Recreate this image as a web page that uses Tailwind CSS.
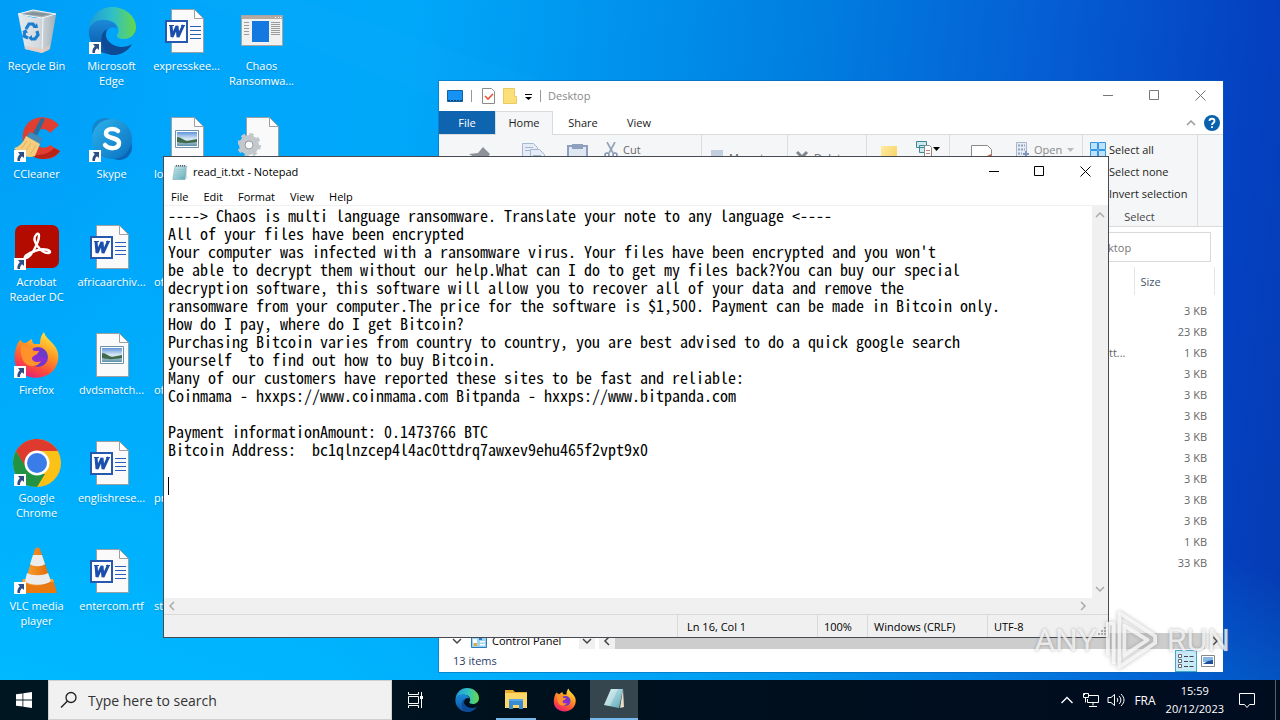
<!DOCTYPE html>
<html lang="en">
<head>
<meta charset="utf-8">
<title>Desktop</title>
<script src="https://cdn.jsdelivr.net/npm/@tailwindcss/browser@4"></script>
</head>
<body class="h-screen overflow-hidden font-['Open_Sans',sans-serif] text-[11px] leading-[15px] text-black">

<!-- Shared icons -->
<svg class="absolute size-0" aria-hidden="true">
  <defs>
    <linearGradient id="gEdgeA" x1="0" y1="0" x2="1" y2="0"><stop offset="0" stop-color="#1f9ad8"/><stop offset=".5" stop-color="#2fc0c8"/><stop offset="1" stop-color="#66d848"/></linearGradient>
    <linearGradient id="gEdgeB" x1="0" y1="0" x2="0" y2="1"><stop offset="0" stop-color="#1b8bd8"/><stop offset="1" stop-color="#0c50a4"/></linearGradient>
    <linearGradient id="gFox" x1=".8" y1="0" x2=".3" y2="1"><stop offset="0" stop-color="#fff044"/><stop offset=".4" stop-color="#ff9a24"/><stop offset=".75" stop-color="#ff4a3c"/><stop offset="1" stop-color="#e0207c"/></linearGradient>
    <linearGradient id="gSky" x1="0" y1="0" x2="1" y2="1"><stop offset="0" stop-color="#2cb4ec"/><stop offset="1" stop-color="#0a6fc0"/></linearGradient>
    <linearGradient id="gBin" x1="0" y1="0" x2="1" y2="0"><stop offset="0" stop-color="#e4e9ec"/><stop offset=".55" stop-color="#d4dade"/><stop offset="1" stop-color="#a2afb8"/></linearGradient>
    <linearGradient id="gCone" x1="0" y1="0" x2="1" y2="0"><stop offset="0" stop-color="#f9a030"/><stop offset="1" stop-color="#e06808"/></linearGradient>
    <linearGradient id="gPhoto" x1="0" y1="0" x2="0" y2="1"><stop offset="0" stop-color="#5e94dc"/><stop offset=".5" stop-color="#dcebf5"/><stop offset="1" stop-color="#5d8fa8"/></linearGradient>
    <linearGradient id="gPad" x1="0" y1="0" x2="1" y2="1"><stop offset="0" stop-color="#d4eef2"/><stop offset="1" stop-color="#5ba8b6"/></linearGradient>
    <linearGradient id="gFold" x1="0" y1="0" x2="1" y2="1"><stop offset="0" stop-color="#ffeaa0"/><stop offset="1" stop-color="#f6cc50"/></linearGradient>
  </defs>
  <symbol id="shortcut" viewBox="0 0 14 14"><path fill="#fff" d="M1 1h12v12H1z"/><path fill="#2d4f86" d="M5 3h6v6L9 7.300C7.500 8.500 7 9.600 7 12H4.500C4 9 5 7 6.800 5.200z"/></symbol>
  <symbol id="page" viewBox="0 0 48 48"><path fill="#fafafa" stroke="#9aa0a4" d="M8.500 2.500h23l9 9v34h-32z"/><path fill="#fff" stroke="#9aa0a4" d="M31.500 2.500v9h9z"/></symbol>
  <symbol id="word" viewBox="0 0 48 48"><use href="#page"/><path stroke="#2b5fb8" d="M27 19.500h11M27 23.500h11M27 27.500h11M27 31.500h11"/><path fill="#fff" stroke="#2758b0" stroke-width="2" d="M3 14h21v21H3z"/><path fill="none" stroke="#1b4fae" stroke-width="3" stroke-linejoin="bevel" d="M8 18l1 12 5-11 1 11 5.500-12"/><path stroke="#1b4fae" d="M6 18.500h5M18 18.500h4"/></symbol>
  <symbol id="photo" viewBox="0 0 48 48"><use href="#page"/><path fill="#fff" stroke="#6c91a8" d="M12.500 15.500h23v17h-23z"/><path fill="url(#gPhoto)" d="M14 17h20v14H14z"/><path fill="#3f6a4a" d="M14 22c4 0 6 3 10 4l10-2v3c-7 1-13 2-20 0z"/></symbol>
  <symbol id="gearpage" viewBox="0 0 48 48"><use href="#page"/><circle cx="11" cy="30" r="7" fill="none" stroke="#c3c8cd" stroke-width="6"/><circle cx="11" cy="30" r="10.500" fill="none" stroke="#c3c8cd" stroke-width="3" stroke-dasharray="4.200 4.046"/><circle cx="11" cy="30" r="4" fill="#fafafa" stroke="#969ca2"/></symbol>
  <symbol id="bin" viewBox="0 0 48 48"><path fill="url(#gBin)" d="M5 7l7 35 17 4 8-4 6-34-21 3z"/><path fill="#a9b3b9" d="M5 7l15-4 23 4-14 4z"/><path fill="#84929a" d="M9 7l11-2 18 2-9 2z"/><path fill="none" stroke="#f4f8fa" d="M5 7l15-4 23 4-14 4zM30 11l-1 34"/><path fill="#e8c9bc" opacity=".7" d="M12 39l17 3 8-4-1 5-7 3-17-4z"/><g fill="none" stroke="#1b7fd0" stroke-width="3.200"><path d="M13 22l3-5h4l2 3M24 24l1 4-3 4h-3M15 31l-4-2 1-5"/></g><path fill="#1b7fd0" d="M20 21h5l-1-5zM19 28v6l-4-3zM9 25l4-3 2 4z"/></symbol>
  <symbol id="edge" viewBox="0 0 48 48"><path fill="url(#gEdgeA)" d="M1 22C2 9 12 0 24 0c14 0 24 10 24 20 0 7-5 12-12 12-5 0-8-2-7-4 3-3 2-12-7-14-9-2-18 1-21 8z"/><path fill="url(#gEdgeB)" d="M1 22c3-8 12-11 21-8 5 2 7 5 7 8-2-3-10-3-11 6-1 8 6 15 15 17-8 4-19 3-26-5C2 35 0 28 1 22z"/><path fill="#0d4b96" d="M19 22c-4 8 2 17 14 18 5 0 8-1 11-3-4 8-13 12-21 11C12 44 10 27 19 22z"/></symbol>
  <symbol id="chaos" viewBox="0 0 48 48"><path fill="#f1f1f1" stroke="#a9a49f" d="M3.500 8.500h41v30h-41z"/><path fill="#b5aaa1" d="M4 9h40v3H4z"/><path stroke="#fff" d="M37 10.500h1M40 10.500h1M42 10.500h1"/><path fill="#1379e0" d="M14 14h17v21H14z"/><path stroke="#9b9b9b" d="M6 15.500h5M6 18.500h5M6 21.500h5M6 24.500h5M6 27.500h5M33 15.500h9M33 17.500h9M33 19.500h9M33 21.500h9M33 23.500h9M33 25.500h9M33 27.500h9"/></symbol>
  <symbol id="ccleaner" viewBox="0 0 48 48"><path fill="#e03e30" d="M46 10C36-2 14-1 10 18c-2 15 8 26 22 26 7 0 12-3 15-8l-10-6c-5 5-14 3-15-6-1-9 9-14 15-6z"/><path fill="#ba2418" d="M18 40c8 7 24 4 29-4l-6-3c-5 6-14 8-23 7z"/><path fill="#2d6c98" d="M28 3l4 1-8 17-5-1z"/><path fill="#3f8bbb" d="M17 17l13 6-3 6-14-7z"/><path fill="#f4cd7e" d="M13 21l14 8-5 12c-8 3-15-1-21-8 5-1 9-5 12-12z"/><path fill="none" stroke="#e3b45c" d="M14 26L8 34M18 28l-6 9M23 30l-6 10"/></symbol>
  <symbol id="skype" viewBox="0 0 48 48"><circle cx="17" cy="16" r="13" fill="#1585cf"/><circle cx="31" cy="32" r="13" fill="#0b66b6"/><circle cx="24" cy="24" r="20" fill="url(#gSky)"/><path fill="none" stroke="#fff" stroke-width="4.500" stroke-linecap="round" d="M30 16c-3-3-13-3-12 3 1 5 13 3 13 9 0 7-11 6-14 2"/></symbol>
  <symbol id="acrobat" viewBox="0 0 48 48"><rect x="2" y="2" width="44" height="43" rx="7" fill="#b30b00"/><path fill="none" stroke="#fff" stroke-width="2.400" stroke-linejoin="round" d="M23 12c-5 5 5 19 13 18 4-2-5-6-14-2-7 2-13 7-9 7 6-1 13-17 13-22 0-3-2-3-3-1z"/></symbol>
  <symbol id="firefox" viewBox="0 0 48 48"><path fill="url(#gFox)" d="M4 14c1-3 3-5 4-5 1 3 3 3 5 3 2-2 4-3 6-4 0 3 1 5 3 5h5c0-5 1-9 4-12 1 5 6 8 10 13 7 8 5 19-1 26-9 9-25 9-34 0C0 33 1 22 4 14z"/><circle cx="25" cy="26" r="10" fill="#6a3bc8"/><path fill="#8b2ed0" d="M15 24c2-6 10-8 15-4-4 0-5 2-5 4 3 3 7 0 9 4-4 8-17 8-19-4z"/><path fill="#ff922a" d="M8 15c5-1 10 1 13 5h5c-1 4-6 4-7 7 0 4 6 5 9 3-3 6-11 7-16 2-3-3-5-10-4-17z"/></symbol>
  <symbol id="chrome" viewBox="0 0 48 48"><circle cx="24" cy="24" r="24" fill="#fbc116"/><path fill="#de3b2e" d="M3 12C9 2 18 0 24 0c9 0 17 5 21 12H24L12 28z"/><path fill="#229342" d="M3 12l11 18 10 5h8L24 48C9 48 0 36 0 24c0-4 1-8 3-12z"/><circle cx="24" cy="24" r="12.500" fill="#fff"/><circle cx="24" cy="24" r="10" fill="#3a7ce8"/></symbol>
  <symbol id="vlc" viewBox="0 0 48 48"><path fill="#e87a10" d="M10 32h30l4 14H5z"/><path fill="#f8a238" d="M10 32h30l1 3H9z"/><path fill="url(#gCone)" d="M22 2c1-2 4-2 5 0l11 33c-4 5-22 5-26 0z"/><path fill="#ececec" d="M20 8h9l3 9c-3 3-12 3-15 0zM14 26c5 3 16 3 21 0l3 8c-5 5-22 5-26 0z"/></symbol>
  <symbol id="notepad" viewBox="0 0 16 16"><path fill="#e2e2da" d="M14 3l1.500 11.500-2 1z"/><path fill="url(#gPad)" stroke="#78a7ae" stroke-width=".6" d="M3 2h11.500L13 15.500H.8z"/><path stroke="#8ec3cc" stroke-width=".7" d="M3.500 5.500h9M3 7.500h9M3 9.500h9M2.500 11.500h9"/><path stroke="#5a5a5a" stroke-dasharray="1 1" stroke-width="1.500" d="M4 1.800h10"/></symbol>
  <symbol id="folder" viewBox="0 0 24 24"><path fill="#e8a92c" d="M1 3h8l2 2h12v4H1z"/><path fill="#ffd767" d="M1 6h22v15H1z"/><path fill="#3a8ad4" d="M5 12h14v10h-4v-4H9v4H5z"/><path fill="#5ba6e6" d="M5 12h14v2H5z"/></symbol>
  <symbol id="close" viewBox="0 0 11 11"><path fill="none" stroke="currentColor" d="M.5.5l10 10M10.500.5l-10 10"/></symbol>
  <symbol id="max" viewBox="0 0 11 11"><path fill="none" stroke="currentColor" d="M.5.5h9v9h-9z"/></symbol>
  <symbol id="min" viewBox="0 0 11 11"><path stroke="currentColor" d="M0 5.500h10"/></symbol>
  <symbol id="up" viewBox="0 0 10 10"><path fill="none" stroke="currentColor" stroke-width="1.500" d="M1 7l4-4 4 4"/></symbol>
  <symbol id="caret" viewBox="0 0 7 4"><path fill="currentColor" d="M0 0h7L3.500 4z"/></symbol>
</svg>

<div class="flex h-full flex-col">
  <main class="relative min-h-0 flex-1 overflow-hidden bg-[linear-gradient(97deg,#009df6_0%,#00a6fb_12%,#00a8fa_30%,#0098f0_42%,#007ee0_60%,#0560d4_76%,#0442c2_92%,#053bb2_100%)]">
    <div class="absolute inset-0 bg-[linear-gradient(20deg,#00b9ff_0%,#00b4ff99_22%,#00b4ff00_50%)]"></div>
    <svg class="absolute inset-0 h-[160px] w-full" aria-hidden="true"><path fill="#20b4ff" opacity=".1" d="M190 0h110l300 100H440z"/></svg>

    <!-- Desktop icons -->
    <div class="relative -ml-px grid h-[648px] w-[300px] grid-flow-col auto-cols-[75px] grid-rows-6 text-center text-white text-shadow-sm">
      <a href="#" class="flex flex-col items-center gap-[3px] pt-[7px]"><svg class="size-12"><use href="#bin"/></svg>Recycle Bin</a>
      <a href="#" class="flex flex-col items-center gap-[3px] pt-[7px]"><svg class="size-12"><use href="#ccleaner"/><use href="#shortcut" y="34" width="14" height="14"/></svg>CCleaner</a>
      <a href="#" class="flex flex-col items-center gap-[3px] pt-[7px]"><svg class="size-12"><use href="#acrobat"/><use href="#shortcut" y="34" width="14" height="14"/></svg><span>Acrobat<br>Reader DC</span></a>
      <a href="#" class="flex flex-col items-center gap-[3px] pt-[7px]"><svg class="size-12"><use href="#firefox"/><use href="#shortcut" y="34" width="14" height="14"/></svg>Firefox</a>
      <a href="#" class="flex flex-col items-center gap-[3px] pt-[7px]"><svg class="size-12"><use href="#chrome"/><use href="#shortcut" y="34" width="14" height="14"/></svg><span>Google<br>Chrome</span></a>
      <a href="#" class="flex flex-col items-center gap-[3px] pt-[7px]"><svg class="size-12"><use href="#vlc"/><use href="#shortcut" y="34" width="14" height="14"/></svg><span>VLC media<br>player</span></a>

      <a href="#" class="flex flex-col items-center gap-[3px] pt-[7px]"><svg class="size-12"><use href="#edge"/><use href="#shortcut" y="34" width="14" height="14"/></svg><span>Microsoft<br>Edge</span></a>
      <a href="#" class="flex flex-col items-center gap-[3px] pt-[7px]"><svg class="size-12"><use href="#skype"/><use href="#shortcut" y="34" width="14" height="14"/></svg>Skype</a>
      <a href="#" class="flex flex-col items-center gap-[3px] pt-[7px]"><svg class="size-12"><use href="#word"/></svg>africaarchiv...</a>
      <a href="#" class="flex flex-col items-center gap-[3px] pt-[7px]"><svg class="size-12"><use href="#photo"/></svg>dvdsmatch...</a>
      <a href="#" class="flex flex-col items-center gap-[3px] pt-[7px]"><svg class="size-12"><use href="#word"/></svg>englishrese...</a>
      <a href="#" class="flex flex-col items-center gap-[3px] pt-[7px]"><svg class="size-12"><use href="#word"/></svg>entercom.rtf</a>

      <a href="#" class="flex flex-col items-center gap-[3px] pt-[7px]"><svg class="size-12"><use href="#word"/></svg>expresskee...</a>
      <a href="#" class="flex flex-col items-center gap-[3px] pt-[7px]"><svg class="size-12"><use href="#photo"/></svg><span class="self-start pl-[5px]">lo</span></a>
      <a href="#" class="flex flex-col pt-[58px] pl-[5px] text-left">of</a>
      <a href="#" class="flex flex-col pt-[58px] pl-[5px] text-left">of</a>
      <a href="#" class="flex flex-col pt-[58px] pl-[5px] text-left">pr</a>
      <a href="#" class="flex flex-col pt-[58px] pl-[5px] text-left">st</a>

      <a href="#" class="flex flex-col items-center gap-[3px] pt-[7px]"><svg class="size-12"><use href="#chaos"/></svg><span>Chaos<br>Ransomwa...</span></a>
      <a href="#" aria-label="Settings file" class="flex flex-col items-center pt-[7px]"><svg class="size-12"><use href="#gearpage"/></svg></a>
    </div>

    <!-- File Explorer window -->
    <section class="absolute top-[81px] right-[57px] bottom-2 left-[439px] flex flex-col bg-white shadow-[0_0_0_1px_#0c5fa880]">
      <header class="flex h-[30px] shrink-0 items-center text-[#888]">
        <svg class="ml-2 h-4 w-4" viewBox="0 0 16 16"><path fill="#1593f5" stroke="#12629f" d="M.5 2.500h15v11H.5z"/><path stroke="#10406a" d="M1 12.500h14" stroke-dasharray="2 1"/></svg>
        <span class="ml-2 h-3 w-px bg-[#999]"></span>
        <svg class="ml-2 h-4 w-4" viewBox="0 0 16 16"><path fill="#fff" stroke="#8b8b8b" d="M2.500.5h9l3 3v12h-12z"/><path fill="none" stroke="#ea5a3c" stroke-width="1.700" d="M5 8l3 3 5-5"/></svg>
        <svg class="ml-[6px] h-4 w-4" viewBox="0 0 16 16"><path fill="#fbdf7b" stroke="#eec95e" d="M1.500.5h11v8h2v7h-13z"/></svg>
        <svg class="ml-[6px] h-4 w-2.5 text-black" viewBox="0 0 10 16"><path stroke="currentColor" d="M1 6.500h7"/><path fill="currentColor" d="M1 9h7L4.500 12z"/></svg>
        <span class="ml-[6px] h-3 w-px bg-[#999]"></span>
        <h2 class="ml-[7px] pb-[2px]">Desktop</h2>
        <div class="ml-auto flex self-stretch pb-[2px] text-[#777]">
          <button aria-label="Minimize" class="grid w-[46px] place-items-center"><svg class="size-[11px]"><use href="#min"/></svg></button>
          <button aria-label="Maximize" class="grid w-[46px] place-items-center"><svg class="size-[11px]"><use href="#max"/></svg></button>
          <button aria-label="Close" class="grid w-[46px] place-items-center"><svg class="size-[11px]"><use href="#close"/></svg></button>
        </div>
      </header>
      <nav class="flex h-6 shrink-0 items-stretch border-b border-[#dadbdc] text-[#222]">
        <button class="w-14 bg-[#0f64b0] text-white">File</button>
        <button class="-mb-px w-[58px] border border-b-0 border-[#dadbdc] bg-[#f5f6f7] pb-[2px]">Home</button>
        <button class="w-[60px]">Share</button>
        <button class="w-[52px]">View</button>
        <button aria-label="Collapse ribbon" class="mr-2 ml-auto text-[#999]"><svg class="size-2.5"><use href="#up"/></svg></button>
        <button aria-label="Help" class="mr-[3px] self-center"><svg class="size-4" viewBox="0 0 16 16"><circle cx="8" cy="8" r="8" fill="#0962ae"/><path fill="none" stroke="#fff" stroke-width="1.800" d="M5.500 6c0-3 5-3 5 0 0 2-2.500 2-2.500 4M8 11.200v1.800"/></svg></button>
      </nav>
      <div class="flex h-[92px] shrink-0 border-b border-[#dadbdc] bg-[#f5f6f7] text-[#666]">
        <div class="flex w-[263px] items-start gap-4 border-r border-[#dcdddf] pt-[7px] pl-[28px]">
          <svg class="mt-1 size-7" viewBox="0 0 28 28"><path fill="#8d9399" d="M16 1l7 7-5 7-5 1-6 6-1-1 1-10-5-3 9-1z"/></svg>
          <svg class="ml-2 size-7" viewBox="0 0 28 28"><path fill="#e5ecf6" stroke="#a6b7d4" d="M3.500 1.500h11l4 4v16h-15z"/><path fill="#e5ecf6" stroke="#a6b7d4" d="M11.500 7.500h9l5 5v14h-14z"/><path stroke="#a6b7d4" d="M6 5.500h8M6 8.500h5M14 13.500h8M14 16.500h9"/></svg>
          <svg class="size-7" viewBox="0 0 28 28"><path fill="#dfe7f2" stroke="#8ea0bd" stroke-width="2" d="M5 4h19v22H5z"/><path fill="#8ea0bd" d="M9 2h11v5H9z"/></svg>
          <div class="-ml-1 flex gap-1"><svg class="h-4 w-4" viewBox="0 0 16 16"><path fill="none" stroke="#8fa0b8" stroke-width="1.600" d="M4 0l6 11M12 0L6 11"/><circle cx="4" cy="13" r="2" fill="none" stroke="#7f93b2" stroke-width="1.500"/><circle cx="12" cy="13" r="2" fill="none" stroke="#7f93b2" stroke-width="1.500"/></svg>Cut</div>
        </div>
        <div class="flex w-[86px] items-start gap-1 border-r border-[#dcdddf] pt-[15px] pl-[9px]"><svg class="h-4 w-3.5"><path fill="#c2cfdf" d="M0 0h12v14H0z"/></svg><span class="whitespace-nowrap">Move to</span><svg class="mt-[6px] h-1 w-[7px] text-[#999]"><use href="#caret"/></svg></div>
        <div class="flex w-[79px] items-start gap-1 border-r border-[#dcdddf] pt-[15px] pl-2"><svg class="h-4 w-3.5"><path stroke="#7f858b" stroke-width="3" d="M1 2l10 10M11 2L1 12"/></svg>Delete<svg class="mt-[6px] h-1 w-[7px] text-[#999]"><use href="#caret"/></svg></div>
        <div class="flex w-[83px] items-start border-r border-[#dcdddf] pt-[5px] pl-[13px]">
          <svg class="mt-[6px] h-8 w-5" viewBox="0 0 20 32"><path fill="url(#gFold)" d="M1 0h16v28H1z"/></svg>
          <svg class="ml-4 size-[18px]" viewBox="0 0 18 18"><path fill="#cfe8ee" stroke="#3e8794" d="M.5 1.500h10v6H.5zM3.500 5.500h9v7h-9z"/><path fill="#fff" stroke="#8a8a8a" d="M8.500 5.500h5l2 2v10h-7z"/><path stroke="#d37e6d" d="M10 10.500h4M10 13.500h4"/></svg>
          <svg class="mt-[7px] -ml-px h-1 w-[7px] text-black"><use href="#caret"/></svg>
        </div>
        <div class="flex w-[133px] items-start border-r border-[#dcdddf] pt-[7px] pl-[20px]">
          <svg class="mt-0.5 size-7" viewBox="0 0 28 28"><path fill="#fff" stroke="#8a8a8a" d="M1.500 1.500h16l4 4v22h-20z"/><path fill="#d8582d" d="M17 12l4-2v8h-4z"/></svg>
          <svg class="ml-4 size-4" viewBox="0 0 16 16"><path fill="#e8edf5" stroke="#a9b7cd" d="M2.500.5h10v14h-10z"/><path stroke="#8fa3c4" stroke-dasharray="2 1" stroke-width="2" d="M4 3.500h7M4 7.500h7M4 11.500h4"/><path stroke="#7f95bb" stroke-width="2" d="M9 12h6M12 9v6"/></svg>
          <span class="ml-1 text-[#888]">Open</span><svg class="mt-[6px] ml-[5px] h-1 w-[7px] text-[#bbb]"><use href="#caret"/></svg>
        </div>
        <div class="flex w-[115px] flex-col border-r border-[#dcdddf] pt-[7px] pl-[7px] text-[#1e1e1e]">
          <button class="flex h-[22px] items-start gap-[3px] whitespace-nowrap"><svg class="size-4" viewBox="0 0 16 16"><path fill="#bfe2fb" stroke="#3596e4" d="M.5.5h7v7h-7zM8.500.5h7v7h-7zM.5 8.500h7v7h-7zM8.500 8.500h7v7h-7z"/></svg>Select all</button>
          <button class="h-[22px] pb-[7px] pl-[19px] text-left whitespace-nowrap">Select none</button>
          <button class="h-[23px] pb-2 pl-[19px] text-left whitespace-nowrap">Invert selection</button>
          <span class="pr-2 text-center text-[#444]">Select</span>
        </div>
      </div>
      <div class="flex shrink-0 justify-end px-3 py-[5px]"><input aria-label="Search Desktop" value="Search Desktop" class="h-[30px] w-[166px] border border-[#d9d9d9] pl-[5px] text-[#777]"></div>
      <div class="flex min-h-0 flex-1 flex-col pl-[655px]">
        <table class="w-full table-fixed text-[#666]">
          <thead><tr class="h-7 text-left text-[#44556a]"><th aria-label="Type" class="w-10 border-r border-[#e5e5e5]"></th><th class="border-r border-[#e5e5e5] pl-[6px] font-normal">Size</th><td class="w-[9px]"></td></tr></thead>
          <tbody>
            <tr class="h-[5px]"></tr>
            <tr class="h-[21px]"><td></td><td class="pr-[7px] text-right">3 KB</td></tr>
            <tr class="h-[21px]"><td></td><td class="pr-[7px] text-right">23 KB</td></tr>
            <tr class="h-[21px]"><td class="pl-[15px]">tt...</td><td class="pr-[7px] text-right">1 KB</td></tr>
            <tr class="h-[21px]"><td></td><td class="pr-[7px] text-right">3 KB</td></tr>
            <tr class="h-[21px]"><td></td><td class="pr-[7px] text-right">3 KB</td></tr>
            <tr class="h-[21px]"><td></td><td class="pr-[7px] text-right">3 KB</td></tr>
            <tr class="h-[21px]"><td></td><td class="pr-[7px] text-right">3 KB</td></tr>
            <tr class="h-[21px]"><td></td><td class="pr-[7px] text-right">3 KB</td></tr>
            <tr class="h-[21px]"><td></td><td class="pr-[7px] text-right">3 KB</td></tr>
            <tr class="h-[21px]"><td></td><td class="pr-[7px] text-right">3 KB</td></tr>
            <tr class="h-[21px]"><td></td><td class="pr-[7px] text-right">3 KB</td></tr>
            <tr class="h-[21px]"><td></td><td class="pr-[7px] text-right">1 KB</td></tr>
            <tr class="h-[21px]"><td></td><td class="pr-[7px] text-right">33 KB</td></tr>
          </tbody>
        </table>
      </div>
      <div class="flex h-4 shrink-0 items-center">
        <svg class="ml-[13px] size-2.5 rotate-180 text-[#444]"><use href="#up"/></svg>
        <svg class="ml-[9px] size-4" viewBox="0 0 16 16"><path fill="#9bd3f5" stroke="#2c7cb8" d="M.5 1.500h15v13H.5z"/><path fill="#fff" d="M2 6h4v4H2zM9 8h5v1.500H9zM9 11h5v1.500H9z"/><path fill="#2878c8" d="M8 3h3v4H8z"/><path fill="#eba932" d="M3 10h3v3H3z"/></svg>
        <span class="ml-[5px] w-[87px] pb-[2px] whitespace-nowrap">Control Panel</span>
        <span class="grid h-4 w-4 place-items-center bg-[#f0f0f0] text-[#444]"><svg class="size-2.5 rotate-180"><use href="#up"/></svg></span>
        <div class="ml-1 flex h-4 flex-1 items-center bg-[#f0f0f0] text-[#444]">
          <svg class="mx-[3px] size-2.5 -rotate-90"><use href="#up"/></svg>
          <div class="h-4 flex-1 bg-[#cdcdcd]"></div>
          <svg class="mr-[3px] ml-[5px] size-2.5 rotate-90"><use href="#up"/></svg>
        </div>
      </div>
      <footer class="flex h-[23px] shrink-0 items-center pl-[14px] text-[#2b3a6b]">
        13 items
        <button aria-label="Details view" class="ml-auto grid h-[22px] w-[22px] place-items-center border border-[#42a6cf] bg-[#c9ebf8]"><svg class="size-4" viewBox="0 0 16 16"><path fill="#fff" stroke="#667" d="M.5 1.500h3v3h-3zM.5 6.500h3v3h-3zM.5 11.500h3v3h-3z"/><path stroke="#445" stroke-dasharray="4 1.500" d="M6 3.500h10M6 8.500h10M6 13.500h10"/></svg></button>
        <button aria-label="Icons view" class="mr-[7px] ml-[3px] grid h-[22px] w-4 place-items-center"><svg class="h-3 w-3.5" viewBox="0 0 14 12"><path fill="#fff" stroke="#888" d="M.5.5h13v11H.5z"/><path fill="#83b7e8" d="M2 2h10v5H2z"/><path fill="#1d4d98" d="M2 9l5-3 5-1v4z"/></svg></button>
      </footer>
    </section>

    <!-- Notepad window -->
    <section class="absolute top-[156px] right-[171px] bottom-[42px] left-[163px] flex flex-col border border-[#454b50] bg-white">
      <header class="flex h-[30px] shrink-0 items-center">
        <svg class="ml-2 size-4"><use href="#notepad"/></svg>
        <h1 class="ml-[5px] pb-[2px]">read_it.txt - Notepad</h1>
        <div class="ml-auto flex self-stretch pb-[2px]">
          <button aria-label="Minimize" class="grid w-[46px] place-items-center"><svg class="size-[11px]"><use href="#min"/></svg></button>
          <button aria-label="Maximize" class="grid w-[45px] place-items-center"><svg class="size-[11px]"><use href="#max"/></svg></button>
          <button aria-label="Close" class="grid w-[46px] place-items-center"><svg class="size-[11px]"><use href="#close"/></svg></button>
        </div>
      </header>
      <nav class="flex h-[19px] shrink-0 items-center gap-[15px] border-b border-[#f0f0f0] pl-[7px]">
        <button>File</button><button>Edit</button><button>Format</button><button>View</button><button>Help</button>
      </nav>
      <div class="flex min-h-0 flex-1">
        <div class="relative flex-1">
          <textarea aria-label="Document text" spellcheck="false" wrap="off" class="block h-full w-full resize-none overflow-hidden pl-1 font-['Noto_Sans_Mono_CJK_SC','Liberation_Mono',monospace] text-[16px] leading-[18px] outline-none">----> Chaos is multi language ransomware. Translate your note to any language <----
All of your files have been encrypted
Your computer was infected with a ransomware virus. Your files have been encrypted and you won't
be able to decrypt them without our help.What can I do to get my files back?You can buy our special
decryption software, this software will allow you to recover all of your data and remove the
ransomware from your computer.The price for the software is $1,500. Payment can be made in Bitcoin only.
How do I pay, where do I get Bitcoin?
Purchasing Bitcoin varies from country to country, you are best advised to do a quick google search
yourself  to find out how to buy Bitcoin.
Many of our customers have reported these sites to be fast and reliable:
Coinmama - hxxps://www.coinmama.com Bitpanda - hxxps://www.bitpanda.com

Payment informationAmount: 0.1473766 BTC
Bitcoin Address:  bc1qlnzcep4l4ac0ttdrq7awxev9ehu465f2vpt9x0

</textarea>
          <span class="absolute top-[271px] left-1 h-[18px] w-px bg-black"></span>
        </div>
        <div class="flex w-4 flex-col items-center justify-between bg-[#f0f0f0] py-1 text-[#aaa]">
          <svg class="size-2.5"><use href="#up"/></svg>
          <svg class="size-2.5 rotate-180"><use href="#up"/></svg>
        </div>
      </div>
      <div class="flex h-4 shrink-0 items-center justify-between bg-[#f0f0f0] pr-5 pl-[3px] text-[#aaa]">
        <svg class="size-2.5 -rotate-90"><use href="#up"/></svg>
        <svg class="size-2.5 rotate-90"><use href="#up"/></svg>
      </div>
      <footer class="flex h-[23px] shrink-0 items-stretch border-t border-[#d9d9d9] bg-[#f0f0f0] leading-6">
        <span class="flex-1"></span>
        <span class="w-[140px] border-l border-[#d9d9d9] pl-[9px]">Ln 16, Col 1</span>
        <span class="w-[50px] border-l border-[#d9d9d9] pl-[6px]">100%</span>
        <span class="w-[120px] border-l border-[#d9d9d9] pl-[6px]">Windows (CRLF)</span>
        <span class="w-[121px] border-l border-[#d9d9d9] pl-[6px]">UTF-8</span>
        <svg class="mt-auto -ml-3 size-3" viewBox="0 0 12 12"><path fill="#aaa" d="M8 2h2v2H8zM5 5h2v2H5zM8 5h2v2H8zM2 8h2v2H2zM5 8h2v2H5zM8 8h2v2H8z"/></svg>
      </footer>
    </section>

    <!-- Watermark -->
    <div class="pointer-events-none absolute right-[50px] bottom-2 flex h-[64px] items-center gap-2 font-['Roboto',sans-serif] text-[32px] leading-9 text-white/75 text-shadow-[0_0_3px_#77777799]">
      <span>ANY</span>
      <svg class="h-16 w-[54px] drop-shadow-[0_0_2px_#777777aa]" viewBox="0 0 56 64"><path fill="none" stroke="#fff" stroke-opacity=".75" stroke-width="4" stroke-linejoin="round" d="M3 48V15h6v42M15 4l37 24v7L15 60zM20 17l24 15-24 16z"/></svg>
      <span>RUN</span>
    </div>
  </main>

  <!-- Taskbar -->
  <footer class="flex h-10 shrink-0 items-stretch bg-[linear-gradient(90deg,#001722,#00101d_50%,#000c20)] text-white">
    <button aria-label="Start" class="grid w-12 place-items-center"><svg class="size-4" viewBox="0 0 16 16"><path fill="#fff" d="M0 2.300l6.500-.9v6.100H0zM7.300 1.300L16 0v7.500H7.300zM0 8.400h6.500v6.200L0 13.700zM7.300 8.400H16V16l-8.700-1.200z"/></svg></button>
    <label class="flex w-[344px] items-center gap-[10px] border border-[#d0d0d0] bg-[#f1f1f1] pl-[11px]">
      <svg class="size-[18px]" viewBox="0 0 18 18"><circle cx="11" cy="6.500" r="5" fill="none" stroke="#222" stroke-width="1.300"/><path stroke="#222" stroke-width="1.400" d="M7.500 10L1 16.500"/></svg>
      <input aria-label="Search" placeholder="Type here to search" class="min-w-0 flex-1 bg-transparent pt-[2px] text-[14px] leading-5 placeholder:text-[#333]">
    </label>
    <button aria-label="Task view" class="grid w-12 place-items-center"><svg class="size-4" viewBox="0 0 16 16"><path fill="none" stroke="#fff" d="M.5 0v2.500h10V0M.5 4.500h10v7H.5zM.5 16v-2.500h10V16M13.500 0v16"/><path fill="#fff" d="M12 4h3v3h-3z"/></svg></button>
    <button aria-label="Microsoft Edge" class="ml-[2px] grid w-[50px] place-items-center"><svg class="size-6"><use href="#edge"/></svg></button>
    <button aria-label="File Explorer" class="mx-1 grid w-10 place-items-center border-b-2 border-[#76b9ed]"><svg class="size-6"><use href="#folder"/></svg></button>
    <button aria-label="Firefox" class="grid w-[50px] place-items-center"><svg class="size-6"><use href="#firefox"/></svg></button>
    <button aria-label="Notepad" class="grid w-12 place-items-center border-b-2 border-[#76b9ed] bg-[#36464f]"><svg class="size-6" viewBox="0 0 24 24"><path fill="#e9ddc6" d="M21 2l1 18-4 1z"/><path fill="url(#gPad)" d="M9 2h12l-4 19-15-3z"/><path fill="#fff" opacity=".3" d="M9 2h7L8 19l-6-1z"/></svg></button>
    <div class="ml-auto flex items-center">
      <svg class="h-3 w-3.5" viewBox="0 0 14 12"><path fill="none" stroke="#fff" stroke-width="1.400" d="M1.500 9L7 3.500 12.500 9"/></svg>
      <svg class="ml-[9px] size-4" viewBox="0 0 16 16"><path fill="none" stroke="#fff" d="M6 3.500h9.500v7H4.500V7M10 10.500v3M6 14.500h8M.5 1.500h5v4h-5zM2.500 5.500v5M1.500 1v2"/></svg>
      <svg class="ml-2 h-4 w-[18px]" viewBox="0 0 18 16"><path fill="none" stroke="#fff" d="M1 5.500h3l3.500-3v11l-3.500-3H1zM10 6c1 1 1 3 0 4M12 4c2.500 2.500 2.500 5.500 0 8M14 2c4 4 4 8 0 12"/></svg>
      <span class="ml-[9px] text-[12px]">FRA</span>
      <time class="ml-[10px] text-center leading-[18px]">15:59<br>20/12/2023</time>
      <button aria-label="Notifications" class="mx-[15px]"><svg class="size-4" viewBox="0 0 16 16"><path fill="none" stroke="#fff" d="M.5 1.500h15v11h-5L8 15.500l-2.500-3h-5z"/></svg></button>
      <span class="ml-[5px] h-10 w-[5px] border-l border-[#56606a]"></span>
    </div>
  </footer>
</div>
</body>
</html>
